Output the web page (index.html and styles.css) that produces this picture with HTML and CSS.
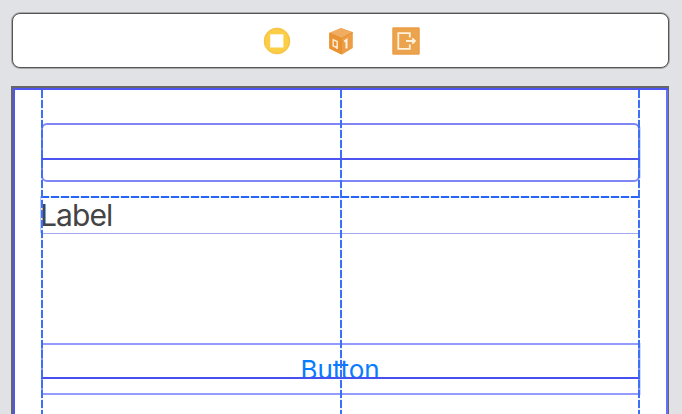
FILE: index.html
```
<!DOCTYPE html>
<html lang="en">
<head>
<meta charset="utf-8">
<title>Interface Builder</title>
<link rel="stylesheet" href="styles.css">
</head>
<body>
<header class="scene-dock">
  <svg class="icon" viewBox="0 0 28 28"><circle cx="14" cy="14" r="13.2" fill="#fbce46"/><circle cx="14" cy="14" r="12.5" fill="none" stroke="#f5c04d"/><path fill="#fff" d="M7.2 7.3h13.2v13.2H7.2z"/></svg>
  <svg class="icon" viewBox="0 0 28 28"><path fill="#ed9d45" d="M14 1 25.8 5.3v15.6L15 27.4 2.3 21.4V6z"/><path fill="#f0ad62" d="M14 1 25.8 5.3 14.4 11.2 2.3 6z"/><path fill="#eb9232" d="M2.3 6 14.4 11.2v16.2L2.3 21.4z"/><path d="m2.3 6 12.1 5.2 11.4-5.9M14.4 11.2v16" fill="none" stroke="#e58d30" stroke-width=".8"/><path d="m6.2 12.8 4 1.8v6.2l-4-1.8zM8.5 19l1.6 2.8" fill="none" stroke="#ffe8cc" stroke-width="1.5"/><path d="m17.3 14.6 2.2-1.6v8.4" fill="none" stroke="#fff4e4" stroke-width="2"/></svg>
  <svg class="icon" viewBox="0 0 28 28"><path fill="#eca34d" d="M.5.5h27v27H.5z"/><path d="M1 1h26v26H1z" fill="none" stroke="#e99a43"/><path d="M17.8 10.5V6.2H6.3v15.6h11.5v-4.3M14 14h9M20.2 11.3 23 14l-2.8 2.7" fill="none" stroke="#fff1dc" stroke-width="1.8"/></svg>
</header>
<main class="view">
  <div class="text-field"></div>
  <div class="label">Label</div>
  <div class="button">Button</div>
  <i class="guide leading"></i>
  <i class="guide center"></i>
  <i class="guide trailing"></i>
</main>
</body>
</html>
```
FILE: styles.css
```
* { box-sizing: border-box; }
body {
  margin: 0;
  height: 414px;
  overflow: hidden;
  padding: 13px 13px 0 11px;
  background: #e1e2e6;
  font-family: Inter, "Liberation Sans", sans-serif;
}
.scene-dock {
  height: 55px;
  margin: 0 0 0 1px;
  padding-left: 1px;
  display: flex;
  align-items: center;
  justify-content: center;
  gap: 36.5px;
  background: #fff;
  border: 1px solid #555;
  border-radius: 8px;
  box-shadow: 0 0 0 1px rgba(85, 85, 85, .4);
}
.icon { width: 28px; height: 28px; }
.view {
  position: relative;
  height: 340px;
  margin-top: 18px;
  padding: 35px 28px 0;
  background: #fff;
  border: 2px solid #666;
  border-right-width: 1px;
  border-bottom: 0;
  box-shadow: inset 2px 2px #4d55f5, inset -2px 0 #6670fa;
}
.text-field {
  position: relative;
  height: 59px;
  border: 2px solid #7f86f3;
  border-radius: 6px;
  box-shadow: 1px 0 #d5d9ff;
}
.text-field::after {
  content: "";
  position: absolute;
  left: -2px;
  right: -2px;
  top: 33px;
  height: 2px;
  background: #4c55ef;
}
.label {
  position: relative;
  height: 38px;
  margin-top: 14px;
  border-bottom: 1px solid #a2abef;
  padding-top: 1px;
  font-size: 30px;
  letter-spacing: -.9px;
  line-height: 36px;
  text-indent: -1px;
  color: #444;
}
.label::before {
  content: "";
  position: absolute;
  left: 0;
  right: 0;
  top: 0;
  height: 2px;
  background: repeating-linear-gradient(90deg, #2764fa 0 8px, #dce4ff 8px 10px);
}
.label::after {
  content: "";
  position: absolute;
  left: -1px;
  top: 0;
  bottom: 0;
  width: 1px;
  background: #c1c7ff;
}
.button {
  position: relative;
  height: 52px;
  margin-top: 109px;
  border: 2px solid #949bff;
  box-shadow: 1px 0 #d5d9ff;
  text-align: center;
  font-size: 26px;
  letter-spacing: -.1px;
  text-indent: -1px;
  line-height: 49px;
  color: #087cff;
}
.button::after {
  content: "";
  position: absolute;
  left: -2px;
  right: -2px;
  top: 32px;
  height: 2px;
  background: #4650f0;
}
.guide {
  position: absolute;
  top: 2px;
  bottom: 0;
  width: 2px;
  background: repeating-linear-gradient(#3b70f7 0 8px, rgba(60, 100, 255, .12) 8px 10px);
}
.leading { left: 28px; }
.center { left: 327px; }
.trailing { right: 28px; }
```
